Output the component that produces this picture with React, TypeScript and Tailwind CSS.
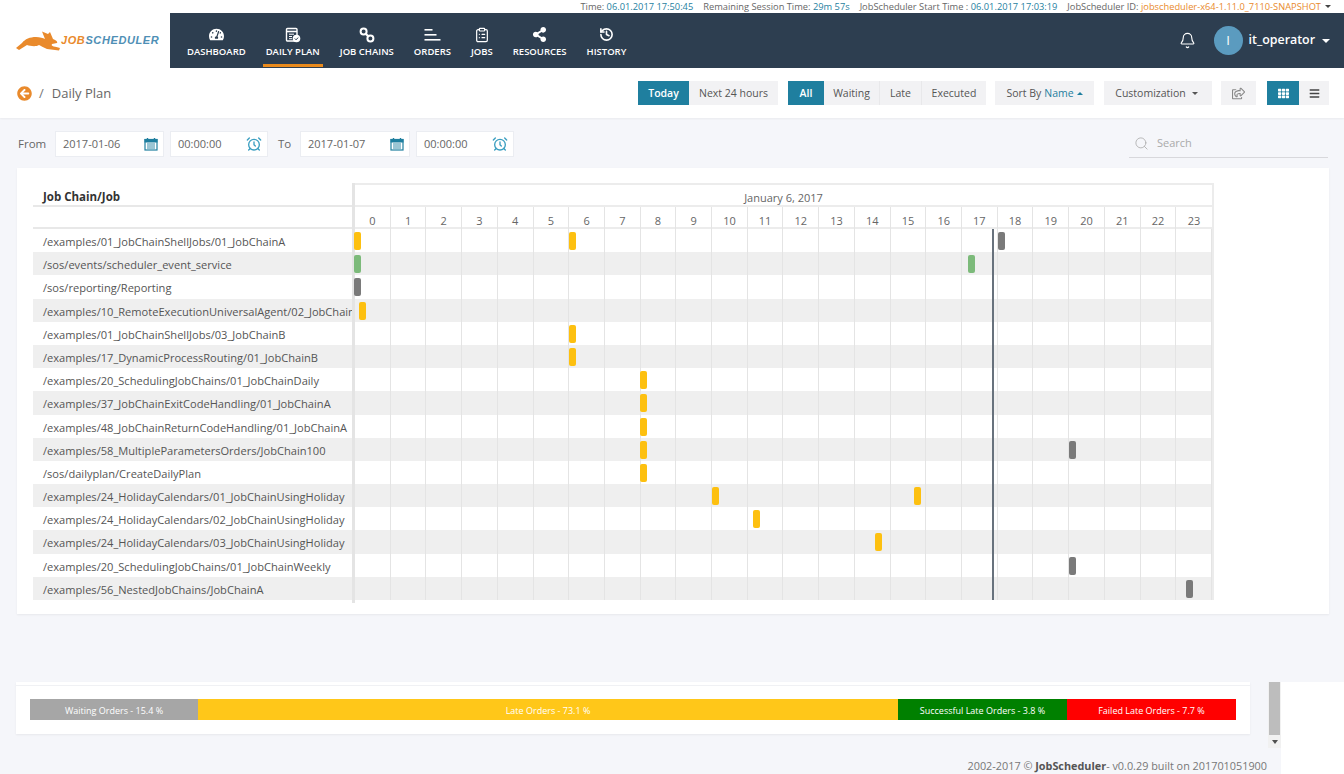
import React from 'react';
import { AlarmClock, Bell, ClipboardList, History, Search } from 'lucide-react';
import { FaArrowCircleLeft, FaBars, FaRegShareSquare, FaShareAlt, FaTachometerAlt, FaTh } from 'react-icons/fa';

const ROWS = [
  '/examples/01_JobChainShellJobs/01_JobChainA',
  '/sos/events/scheduler_event_service',
  '/sos/reporting/Reporting',
  '/examples/10_RemoteExecutionUniversalAgent/02_JobChain',
  '/examples/01_JobChainShellJobs/03_JobChainB',
  '/examples/17_DynamicProcessRouting/01_JobChainB',
  '/examples/20_SchedulingJobChains/01_JobChainDaily',
  '/examples/37_JobChainExitCodeHandling/01_JobChainA',
  '/examples/48_JobChainReturnCodeHandling/01_JobChainA',
  '/examples/58_MultipleParametersOrders/JobChain100',
  '/sos/dailyplan/CreateDailyPlan',
  '/examples/24_HolidayCalendars/01_JobChainUsingHoliday',
  '/examples/24_HolidayCalendars/02_JobChainUsingHoliday',
  '/examples/24_HolidayCalendars/03_JobChainUsingHoliday',
  '/examples/20_SchedulingJobChains/01_JobChainWeekly',
  '/examples/56_NestedJobChains/JobChainA',
];

const Y = '#fdc010';
const G = '#7a7a7a';
const L = '#7cba7a';

// bar x is in page pixels, converted when drawn
const BARS: [number, string][][] = [
  [[354, Y], [569, Y], [998, G]],
  [[354, L], [968, L]],
  [[354, G]],
  [[359, Y]],
  [[569, Y]],
  [[569, Y]],
  [[640, Y]],
  [[640, Y]],
  [[640, Y]],
  [[640, Y], [1069, G]],
  [[640, Y]],
  [[712, Y], [914, Y]],
  [[753, Y]],
  [[875, Y]],
  [[1069, G]],
  [[1186, G]],
];

const HOURS = Array.from({ length: 24 }, (_, i) => i);

const DailyPlanIcon = () => (
  <svg width="16" height="16" viewBox="0 0 16 16" fill="none">
    <rect x="1.5" y="1.5" width="10.5" height="12.5" rx="1" stroke="#fff" strokeWidth="1.4" />
    <path d="M1.5 4.5h10.5" stroke="#fff" strokeWidth="1.6" />
    <path d="M4 7.2h5M4 9.5h3M4 11.7h3" stroke="#fff" strokeWidth="1" />
    <circle cx="11.5" cy="11.5" r="3.8" fill="#fff" />
    <path d="M9.8 11.5l1.3 1.3 2-2.2" stroke="#2d3e50" strokeWidth="1" />
  </svg>
);

const ChainIcon = () => (
  <svg width="16" height="16" viewBox="0 0 16 16" fill="none" stroke="#fff">
    <circle cx="4.6" cy="4.6" r="3" strokeWidth="2" />
    <circle cx="11.4" cy="11.4" r="3" strokeWidth="2" />
    <path d="M6.5 6.5l3 3" strokeWidth="2.2" />
  </svg>
);

const OrdersIcon = () => (
  <svg width="17" height="16" viewBox="0 0 17 16" fill="#fff">
    <rect x="0.5" y="2" width="8" height="1.6" />
    <rect x="0.5" y="7" width="12" height="1.6" />
    <rect x="0.5" y="12" width="16" height="1.6" />
  </svg>
);

const CalendarIcon = () => (
  <svg width="14" height="14" viewBox="0 0 14 14" fill="none" stroke="#1f7f9f">
    <rect x="1" y="2.5" width="12" height="10.5" strokeWidth="1.2" />
    <rect x="1" y="2.5" width="12" height="2.5" fill="#1f7f9f" strokeWidth="1" />
    <path d="M3.5 1v2.5M10.5 1v2.5" strokeWidth="1.4" />
    <path d="M3 7h8M3 9h8M3 11h8" strokeWidth="0.9" />
  </svg>
);

const Rabbit = () => (
  <svg width="44" height="20" viewBox="0 0 44 20" fill="#e98a2c">
    <path d="M0 17L6 12C9 8 14 6 20 6C24 6 27 7 29 8L26 .5L32 3L34 1L37 8C40 9 42 11 41 12L36 13C35 15 36 15 44 17L43 19.5L31 18C27 16 25 15 23 14C20 16 14 15 11 14L3 19Z" />
  </svg>
);

const NavItem = ({ label, icon, active }: { label: string; icon: React.ReactNode; active?: boolean }) => (
  <div className="relative flex flex-col items-center h-full pt-[13px]">
    <div className="h-[17px] flex items-center justify-center text-white">{icon}</div>
    <div className="text-[9.5px] font-semibold text-white mt-[2px] leading-[14px] whitespace-nowrap">{label}</div>
    {active && <div className="absolute bottom-[1px] -left-[3px] -right-[3px] h-[3px] bg-[#e98a1c]" />}
  </div>
);

const Btn = ({ children, active, className }: { children: React.ReactNode; active?: boolean; className: string }) => (
  <div
    className={`h-[24px] flex items-center justify-center pt-[1px] text-[10.5px] ${
      active ? 'bg-[#1f7f9f] text-white font-semibold' : 'bg-[#f2f2f4] text-[#555]'
    } ${className}`}
  >
    {children}
  </div>
);

const Input = ({ value, icon, className }: { value: string; icon: React.ReactNode; className: string }) => (
  <div className={`h-[26px] bg-white border border-[#ebedf2] flex items-center justify-between pl-[7px] pr-[5px] text-[11px] text-[#666] ${className}`}>
    <span>{value}</span>
    {icon}
  </div>
);

export default function App() {
  return (
    <div className="w-full h-[774px] overflow-hidden bg-[#f5f6fa] text-[#555] flex flex-col font-['Open_Sans',sans-serif]">
      {/* session info */}
      <div className="h-[13px] bg-white flex justify-end items-center gap-[10px] pr-[13px] text-[9.3px] text-[#666] leading-none whitespace-nowrap">
        <span>Time: <span className="text-[#1f7f9f]">06.01.2017 17:50:45</span></span>
        <span>Remaining Session Time: <span className="text-[#1f7f9f]">29m 57s</span></span>
        <span>JobScheduler Start Time : <span className="text-[#1f7f9f]">06.01.2017 17:03:19</span></span>
        <span className="flex items-center gap-[4px]">
          <span>JobScheduler ID: <span className="text-[#e98a2c]">jobscheduler-x64-1.11.0_7110-SNAPSHOT</span></span>
          <span className="w-0 h-0 border-x-[3px] border-x-transparent border-t-[3px] border-t-[#444]" />
        </span>
      </div>

      {/* header */}
      <div className="h-[55px] flex shrink-0">
        <div className="w-[170px] bg-white flex items-center pl-[16px] gap-[1px]">
          <Rabbit />
          <span className="font-['Liberation_Sans',sans-serif] font-bold italic text-[11px] tracking-[0.6px] whitespace-nowrap">
            <span className="text-[#e98a2c]">JOB</span>
            <span className="text-[#4f8fb5]">SCHEDULER</span>
          </span>
        </div>
        <div className="flex-1 bg-[#2d3e50] flex items-start pl-[17px] pr-[14px] gap-[20px]">
          <NavItem label="DASHBOARD" icon={<FaTachometerAlt size={15} />} />
          <NavItem label="DAILY PLAN" icon={<DailyPlanIcon />} active />
          <NavItem label="JOB CHAINS" icon={<ChainIcon />} />
          <NavItem label="ORDERS" icon={<OrdersIcon />} />
          <NavItem label="JOBS" icon={<ClipboardList size={16} strokeWidth={1.8} />} />
          <NavItem label="RESOURCES" icon={<FaShareAlt size={15} />} />
          <NavItem label="HISTORY" icon={<History size={15} strokeWidth={2.6} />} />
          <div className="ml-auto flex items-center h-full text-white">
            <Bell size={17} strokeWidth={1.6} />
            <div className="ml-[18px] w-[29px] h-[29px] rounded-full bg-[#5b9bbf] flex items-center justify-center text-[13px]">I</div>
            <span className="ml-[6px] text-[12.4px] font-semibold">it_operator</span>
            <span className="ml-[7px] w-0 h-0 border-x-[4px] border-x-transparent border-t-[4px] border-t-white" />
          </div>
        </div>
      </div>

      {/* breadcrumb and actions */}
      <div className="h-[50px] shrink-0 bg-white shadow-[0_1px_2px_rgba(0,0,0,0.05)] flex items-center pl-[17px] pr-[15px]">
        <FaArrowCircleLeft size={15} color="#e98a2c" />
        <span className="ml-[7px] text-[13px] text-[#777] pt-[2px]">/</span>
        <span className="ml-[8px] text-[13px] text-[#666] pt-[2px]">Daily Plan</span>
        <div className="ml-auto flex items-center">
          <Btn active className="w-[51px]">Today</Btn>
          <Btn className="w-[89px]">Next 24 hours</Btn>
          <Btn active className="w-[36px] ml-[10px]">All</Btn>
          <Btn className="w-[55px]">Waiting</Btn>
          <Btn className="w-[42px] border-l border-[#e8e8ea]">Late</Btn>
          <Btn className="w-[65px] border-l border-[#e8e8ea]">Executed</Btn>
          <Btn className="w-[99px] ml-[9px] gap-[3px]">
            Sort By <span className="text-[#1f7f9f]">Name</span>
            <span className="w-0 h-0 border-x-[3px] border-x-transparent border-b-[3px] border-b-[#1f7f9f]" />
          </Btn>
          <Btn className="w-[108px] ml-[10px] gap-[6px] pr-[3px]">
            Customization
            <span className="w-0 h-0 border-x-[3px] border-x-transparent border-t-[3px] border-t-[#555]" />
          </Btn>
          <Btn className="w-[35px] ml-[9px]"><FaRegShareSquare size={13} color="#888" /></Btn>
          <Btn active className="w-[32px] ml-[11px]"><FaTh size={11} /></Btn>
          <Btn className="w-[30px]"><FaBars size={11} color="#444" /></Btn>
        </div>
      </div>

      {/* date filter */}
      <div className="h-[50px] shrink-0 flex items-center pt-[2px] pl-[18px] pr-[16px] text-[11.5px] text-[#666]">
        <span className="w-[37px]">From</span>
        <Input value="2017-01-06" icon={<CalendarIcon />} className="w-[109px]" />
        <Input value="00:00:00" icon={<AlarmClock size={16} strokeWidth={2} color="#3a9ec0" />} className="w-[98px] ml-[6px]" />
        <span className="ml-[10px] w-[22px]">To</span>
        <Input value="2017-01-07" icon={<CalendarIcon />} className="w-[110px]" />
        <Input value="00:00:00" icon={<AlarmClock size={16} strokeWidth={2} color="#3a9ec0" />} className="w-[98px] ml-[6px]" />
        <div className="ml-auto w-[199px] h-[27px] border-b border-[#d8d8dc] flex items-center pl-[5px] gap-[8px] text-[#aaa] text-[11px]">
          <Search size={15} strokeWidth={1.3} />
          <span>Search</span>
        </div>
      </div>

      {/* gantt card */}
      <div className="ml-[17px] mr-[15px] h-[446px] shrink-0 bg-white shadow-[0_1px_2px_rgba(0,0,0,0.06)] pt-[15px] pl-[16px]">
        <div className="w-[1181px]">
          <div className="flex h-[46px]">
            <div className="w-[319px] shrink-0">
              <div className="h-[24px] border-b-2 border-[#e8e8e8] pl-[10px] pt-[6px] text-[11.5px] font-bold text-[#333] flex items-center">Job Chain/Job</div>
              <div className="h-[22px] border-b-2 border-[#e8e8e8]" />
            </div>
            <div className="w-[3px] shrink-0 bg-[#e4e4e4]" />
            <div className="w-[859px] shrink-0 border-t-2 border-r-2 border-[#ececec]">
              <div className="h-[22px] border-b-2 border-[#ececec] text-[11px] text-[#666] flex items-center justify-center pt-[6px]">January 6, 2017</div>
              <div className="h-[22px] border-b-2 border-[#ececec] grid grid-cols-24 text-[11px] text-[#666]">
                {HOURS.map(h => (
                  <div key={h} className="border-r border-[#e4e4e4] last:border-r-0 flex items-center justify-center pt-[6px]">{h}</div>
                ))}
              </div>
            </div>
          </div>
          <div className="relative">
            {ROWS.map((name, r) => (
              <div key={name} className={`flex h-[23.2px] ${r % 2 === 1 ? 'bg-[#efefef]' : ''}`}>
                <div className="w-[319px] shrink-0 pl-[10px] text-[11.1px] leading-[25px] text-[#555] whitespace-nowrap overflow-hidden">{name}</div>
                <div className="w-[3px] shrink-0 bg-[#e4e4e4]" />
                <div className="w-[859px] shrink-0 relative grid grid-cols-24 border-r-2 border-[#ececec]">
                  {HOURS.map(h => (
                    <div key={h} className="border-r border-[#e4e4e4] last:border-r-0" />
                  ))}
                  {BARS[r].map(([x, color]) => (
                    <div
                      key={x}
                      className="absolute top-[3px] w-[7px] h-[18px] rounded-[2px]"
                      style={{ left: x - 355, backgroundColor: color }}
                    />
                  ))}
                </div>
              </div>
            ))}
            <div className="absolute top-0 bottom-0 left-[959px] w-[2px] bg-[#68727d]" />
          </div>
          <div className="ml-[319px] w-[3px] h-[3px] bg-[#e4e4e4]" />
        </div>
      </div>

      <div className="h-[68px] shrink-0" />

      {/* stats and footer */}
      <div className="flex-1 flex bg-white">
        <div className="w-[1281px] bg-[#f5f6fa] relative pl-[16px]">
          <div className="w-[1234px] h-[52px] bg-white shadow-[0_1px_2px_rgba(0,0,0,0.06)]">
            <div className="pt-[3px]"><div className="h-px bg-[#f0f1f4]" /></div>
            <div className="flex h-[21px] mt-[13px] ml-[14px] text-[9px] text-white leading-[23px] text-center whitespace-nowrap">
              <div className="w-[168px] bg-[#a6a6a6]">Waiting Orders - 15.4 %</div>
              <div className="w-[700px] bg-[#ffc719]">Late Orders - 73.1 %</div>
              <div className="w-[169px] bg-[#008000]">Successful Late Orders - 3.8 %</div>
              <div className="w-[169px] bg-[#ff0000]">Failed Late Orders - 7.7 %</div>
            </div>
          </div>
          <div className="absolute top-0 right-0 w-[13px] h-[66px] bg-[#f1f1f1] flex flex-col items-center">
            <div className="w-[11px] h-[53px] bg-[#bdbdbd]" />
            <div className="mt-[5px] w-0 h-0 border-x-[3.5px] border-x-transparent border-t-[4px] border-t-[#505050]" />
          </div>
          <div className="absolute bottom-[1px] right-[14px] text-[10.85px] leading-[14px] text-[#777] whitespace-nowrap">
            2002-2017 © <span className="font-bold text-[#555]">JobScheduler</span>- v0.0.29 built on 201701051900
          </div>
        </div>
      </div>
    </div>
  );
}
